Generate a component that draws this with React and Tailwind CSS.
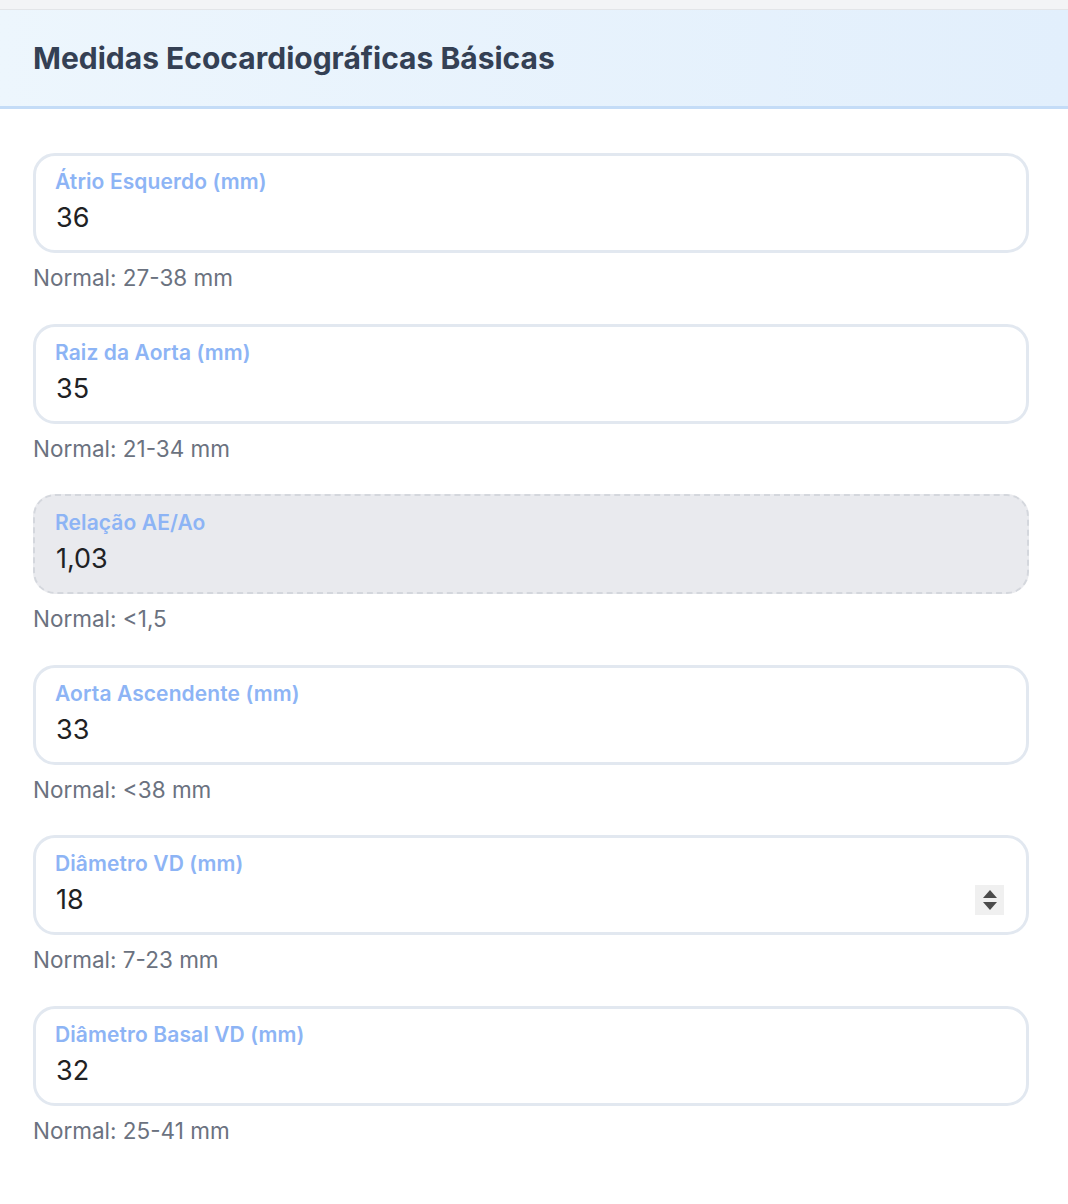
import React from "react";

const fields = [
  { label: "Átrio Esquerdo (mm)", value: "36", normal: "Normal: 27-38 mm" },
  { label: "Raiz da Aorta (mm)", value: "35", normal: "Normal: 21-34 mm" },
  { label: "Relação AE/Ao", value: "1,03", normal: "Normal: <1,5", computed: true },
  { label: "Aorta Ascendente (mm)", value: "33", normal: "Normal: <38 mm" },
  { label: "Diâmetro VD (mm)", value: "18", normal: "Normal: 7-23 mm", spinner: true },
  { label: "Diâmetro Basal VD (mm)", value: "32", normal: "Normal: 25-41 mm" },
];

const Spinner = () => (
  <div className="w-[29px] h-[30px] bg-[#f0f0f0] flex flex-col items-center justify-center gap-[4px]">
    <svg width="14" height="8" viewBox="0 0 14 8">
      <path d="M7 0 L14 8 L0 8 Z" fill="#4b4b4b" />
    </svg>
    <svg width="14" height="8" viewBox="0 0 14 8">
      <path d="M0 0 L14 0 L7 8 Z" fill="#4b4b4b" />
    </svg>
  </div>
);

const Field = ({ label, value, normal, computed, spinner }) => (
  <div className="flex flex-col">
    <div
      className={
        computed
          ? "h-[100px] rounded-[22px] border-[2px] border-dashed border-[#d4d7dd] bg-[#e9eaee] pl-[20px] pr-[23px] pt-[15px]"
          : "h-[100px] rounded-[22px] border-[3px] border-[#e2e8f0] bg-white pl-[19px] pr-[22px] pt-[14px]"
      }
    >
      <div className="text-[21px] leading-[24px] font-semibold text-[#8db4f5] tracking-[0.1px]">{label}</div>
      <div className="mt-[8px] flex items-center justify-between">
        <span className="pl-[1px] text-[27px] leading-[32px] text-[#202124]">{value}</span>
        {spinner && <Spinner />}
      </div>
    </div>
    <div className="mt-[11px] text-[22.5px] leading-[28px] text-[#6b7280]">{normal}</div>
  </div>
);

export default function App() {
  return (
    <div className="min-h-screen bg-white" style={{ fontFamily: "Inter, 'Noto Sans', sans-serif" }}>
      <div className="h-[10px] bg-[#f3f4f6] border-b border-[#e3e5e8]" />
      <div className="h-[99px] bg-gradient-to-r from-[#edf6fd] to-[#e2effc] border-b-[3px] border-[#c4dcf7] px-[33px] flex items-center">
        <h1 className="text-[30px] font-bold text-[#344054]">
          Medidas Ecocardiográficas Básicas
        </h1>
      </div>
      <div className="pl-[33px] pr-[39px] pt-[44px] pb-[40px] flex flex-col gap-[31.5px]">
        {fields.map((f) => (
          <Field key={f.label} {...f} />
        ))}
      </div>
    </div>
  );
}
